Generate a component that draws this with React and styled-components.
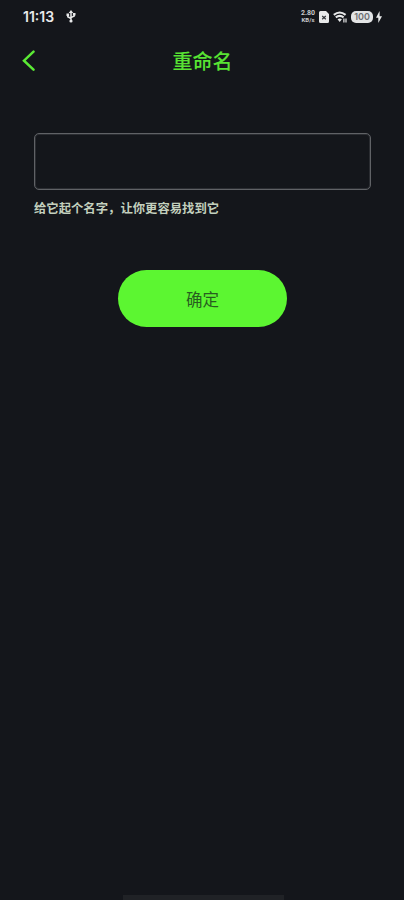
import React, { useState } from 'react';
import styled, { createGlobalStyle } from 'styled-components';

const GlobalStyle = createGlobalStyle`
  * {
    box-sizing: border-box;
  }

  body {
    margin: 0;
    background: #14161b;
    font-family: 'Noto Sans', 'Noto Sans CJK SC', sans-serif;
  }
`;

const Screen = styled.div`
  display: flex;
  flex-direction: column;
  width: 404px;
  height: 900px;
  overflow: hidden;
  background: #14161b;
`;

const StatusBar = styled.div`
  display: flex;
  align-items: center;
  height: 33px;
  padding: 0 22px 0 23px;
  color: #e8e9ea;
`;

const Clock = styled.span`
  width: 43px;
  font: 600 14px/16px Inter, sans-serif;
  letter-spacing: 0;
`;

const StatusIcons = styled.div`
  display: flex;
  align-items: center;
  margin-left: auto;
`;

const Speed = styled.div`
  display: flex;
  flex-direction: column;
  align-items: center;
  width: 16px;
  margin-right: 3px;
  color: #c9cacc;
  font: 700 7px/7px Roboto, sans-serif;
  white-space: nowrap;

  span:last-child {
    font-size: 6px;
    line-height: 6px;
  }
`;

const Battery = styled.div`
  width: 22px;
  height: 12px;
  margin: 0 3px 0 4px;
  border-radius: 5px;
  background: #e3e4e5;
  color: #6c6e71;
  font: 600 9px/12px Inter, sans-serif;
  text-align: center;
`;

const Header = styled.header`
  display: grid;
  grid-template-columns: 60px 1fr 60px;
  align-items: center;
  height: 56px;
`;

const BackButton = styled.button`
  display: flex;
  width: 40px;
  padding: 0 0 0 22px;
  border: 0;
  background: none;
  color: #5bea35;
`;

const Title = styled.h1`
  margin: 0;
  padding: 2px 0 0 1px;
  color: #58e333;
  font-size: 20px;
  font-weight: 500;
  line-height: 28px;
  text-align: center;
`;

const Form = styled.form`
  display: flex;
  flex-direction: column;
  padding: 44px 33px 0 34px;
`;

const NameInput = styled.input`
  width: 100%;
  height: 57px;
  padding: 0 14px;
  border: 1px solid #606266;
  border-radius: 5px;
  outline: 0;
  background: transparent;
  box-shadow: inset 0 0 0 1px #2b2d32;
  color: #e8e9ea;
  font-size: 16px;
`;

const Hint = styled.p`
  margin: 10px 0 0;
  color: #c3d0be;
  font-size: 12.35px;
  font-weight: 700;
  line-height: 18px;
  white-space: nowrap;
`;

const SubmitButton = styled.button`
  align-self: center;
  width: 169px;
  height: 57px;
  margin-top: 52px;
  padding: 2px 0 0;
  border: 0;
  border-radius: 29px;
  background: #5cf631;
  color: #285d20;
  font-family: inherit;
  font-size: 16.5px;
  line-height: 24px;
`;

const HomeIndicator = styled.div`
  flex: none;
  align-self: center;
  width: 161px;
  height: 5px;
  margin-top: auto;
  margin-left: 3px;
  background: #202226;
`;

const UsbIcon = () => (
  <svg width="10" height="13" viewBox="0 0 10 13" fill="none" stroke="currentColor" strokeWidth="1.5">
    <path d="M5 2v9M1.8 4.5v2.2L5 8.5M8.2 4v2L5 7.6" />
    <path d="M5 0l2.300 3H2.700zM.5 3.400h2.600v2.500H.5zM6.900 3h2.600v2.500H6.900z" fill="currentColor" stroke="none" />
    <circle cx="5" cy="11" r="1.600" fill="currentColor" stroke="none" />
  </svg>
);

const SimIcon = () => (
  <svg width="10" height="12" viewBox="0 0 10 12">
    <path d="M1.5 0H7l3 3v7.500A1.500 1.500 0 0 1 8.500 12h-7A1.500 1.500 0 0 1 0 10.500v-9A1.500 1.500 0 0 1 1.500 0z" fill="currentColor" />
    <path d="M3.200 5l3.600 3.200M6.800 5L3.200 8.200" stroke="#34363a" strokeWidth="1.200" />
  </svg>
);

const WifiSvg = styled.svg`
  margin-left: 4px;
`;

const WifiIcon = () => (
  <WifiSvg width="14" height="12" viewBox="0 0 14 12" fill="none" stroke="currentColor">
    <path d="M.8 3.800Q6.700-.8 12.600 3.800M2.800 6.300q3.900-3 7.800 0" strokeWidth="2.100" />
    <path d="M4.500 8.300Q6.700 6.800 8.900 8.300L6.700 11z" fill="currentColor" stroke="none" />
    <path d="M10.900 7.500v4M13 7.500v4" strokeWidth="1.200" />
  </WifiSvg>
);

const BoltIcon = () => (
  <svg width="6" height="12" viewBox="0 0 6 12">
    <path d="M3.600 0L0 6.700h2.300V12L6 5.200H3.600z" fill="currentColor" />
  </svg>
);

const BackIcon = () => (
  <svg width="14" height="22" viewBox="0 0 14 22" fill="none" stroke="currentColor" strokeWidth="2.500" strokeLinecap="round">
    <path d="M11.500 1.700L2 10.700l9.500 9" />
  </svg>
);

const App = () => {
  const [name, setName] = useState('');

  return (
    <>
      <GlobalStyle />
      <Screen>
        <StatusBar>
          <Clock>11:13</Clock>
          <UsbIcon />
          <StatusIcons>
            <Speed>
              <span>2.80</span>
              <span>KB/s</span>
            </Speed>
            <SimIcon />
            <WifiIcon />
            <Battery>100</Battery>
            <BoltIcon />
          </StatusIcons>
        </StatusBar>
        <Header>
          <BackButton aria-label="返回">
            <BackIcon />
          </BackButton>
          <Title>重命名</Title>
        </Header>
        <Form onSubmit={e => e.preventDefault()}>
          <NameInput value={name} onChange={e => setName(e.target.value)} />
          <Hint>给它起个名字，让你更容易找到它</Hint>
          <SubmitButton type="submit">确定</SubmitButton>
        </Form>
        <HomeIndicator />
      </Screen>
    </>
  );
};

export default App;
